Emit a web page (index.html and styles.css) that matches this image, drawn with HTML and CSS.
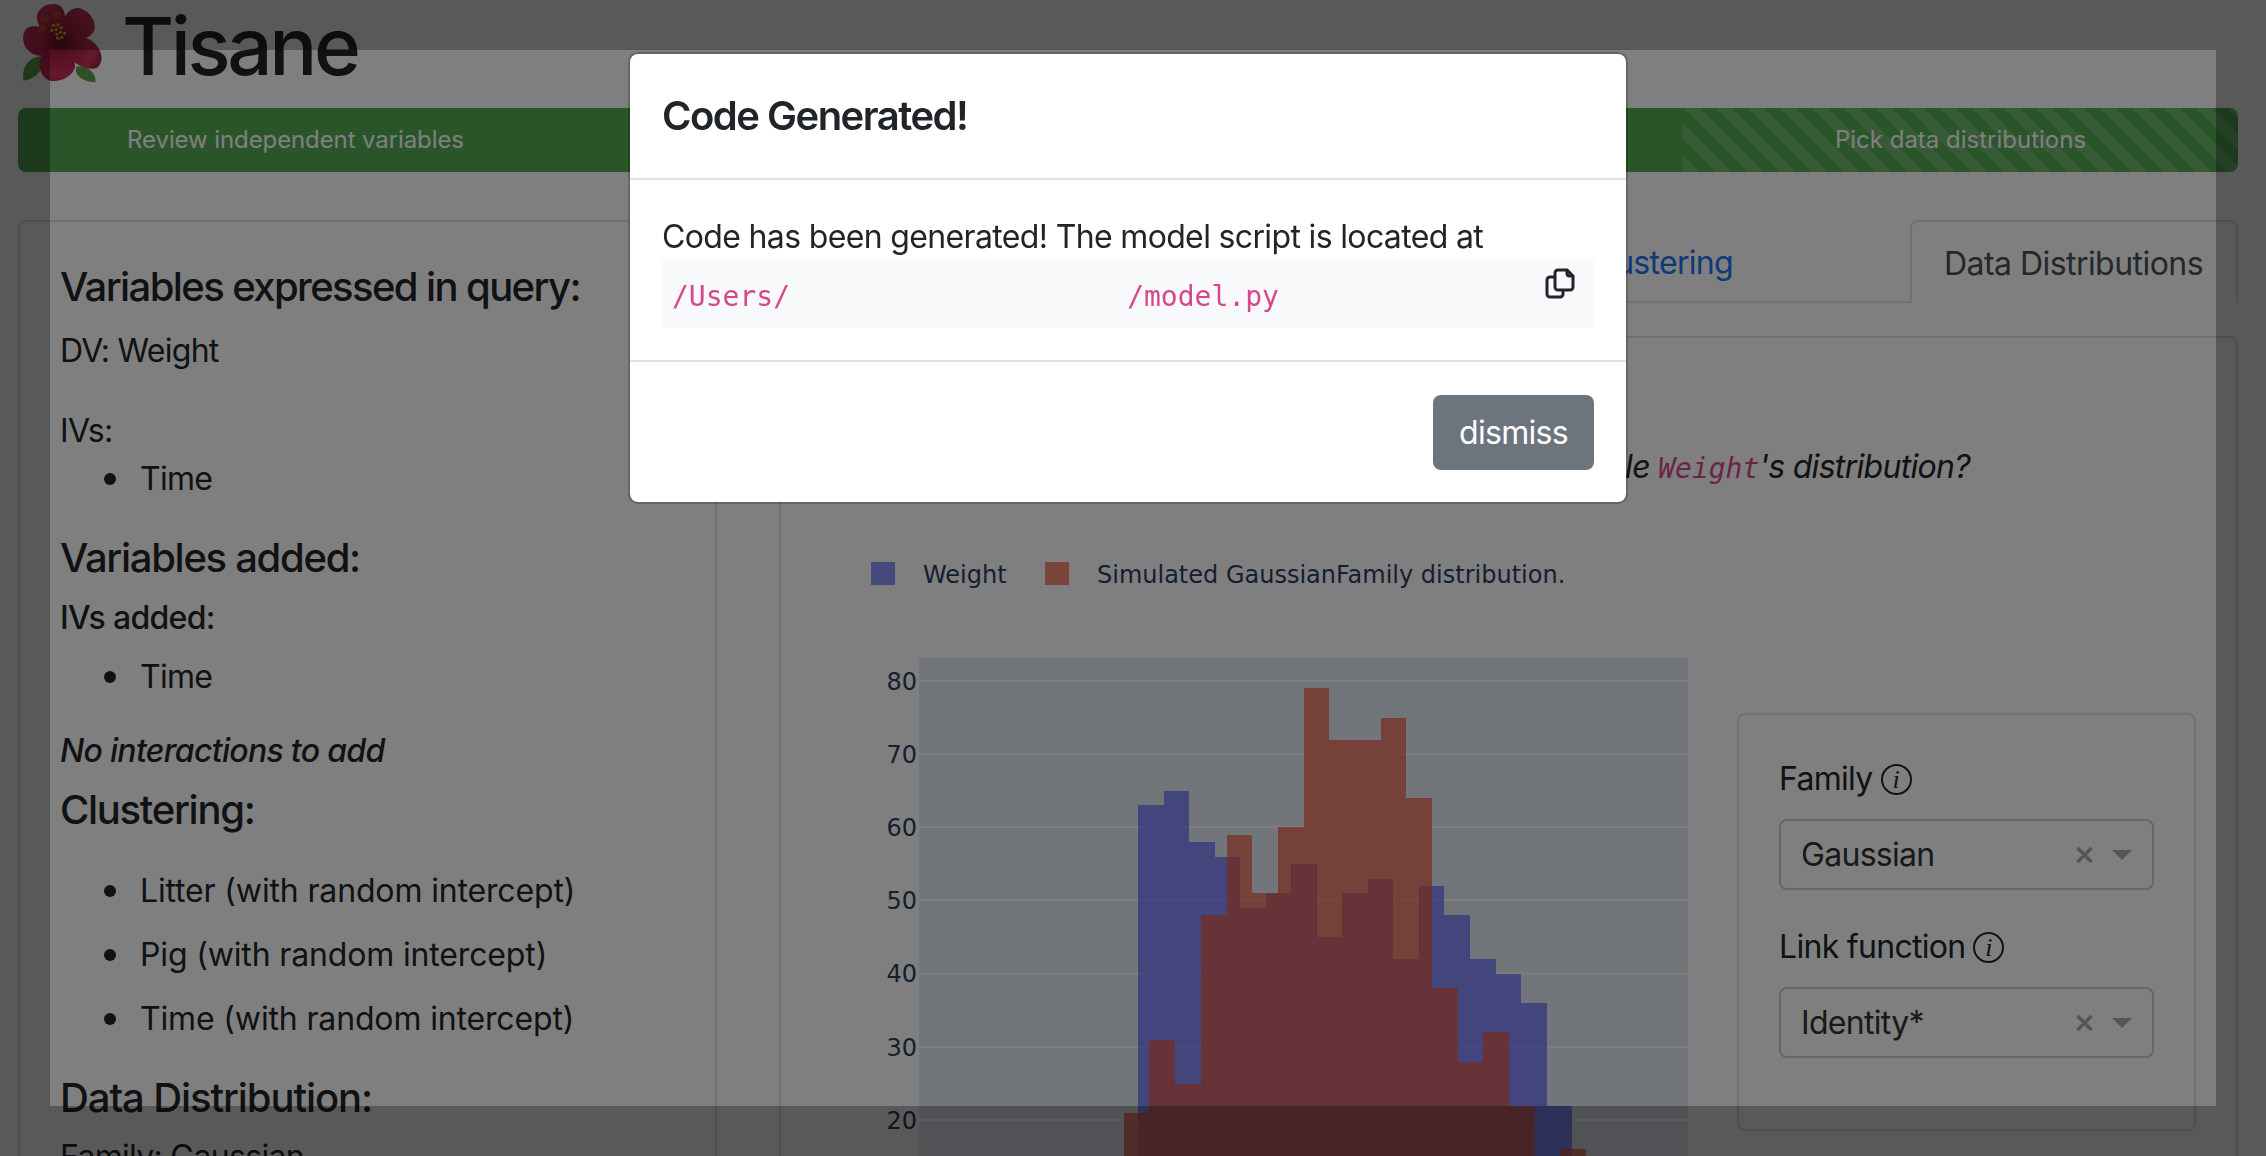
FILE: index.html
```html
<!DOCTYPE html>
<html lang="en">
<head>
    <meta charset="UTF-8">
    <title>Tisane</title>
    <link rel="stylesheet" href="styles.css">
</head>
<body>

<div class="page">
    <header class="title-row">
        <svg class="hibiscus" viewBox="36 12 242 240" aria-hidden="true">
            <defs>
                <radialGradient id="petal" gradientUnits="userSpaceOnUse" cx="150" cy="125" r="135">
                    <stop offset="0" stop-color="#5e0c22"/>
                    <stop offset="0.3" stop-color="#a81e44"/>
                    <stop offset="0.8" stop-color="#cc3159"/>
                    <stop offset="1" stop-color="#98203f"/>
                </radialGradient>
            </defs>
            <path fill="#5fa044" d="M40 245C34 210 50 176 92 172C106 205 84 238 40 245Z"/>
            <path fill="#5fa044" d="M256 250C258 225 240 202 200 202C190 226 212 248 256 250Z"/>
            <path fill="url(#petal)" d="M150 112C150 60 175 25 205 27C240 35 262 70 250 100C225 130 180 130 150 122Z"/>
            <path fill="url(#petal)" d="M150 120C110 115 80 85 80 50C85 25 115 10 140 16C165 22 170 60 160 90Z"/>
            <path fill="url(#petal)" d="M150 140C120 170 85 180 60 160C35 140 32 105 50 88C75 72 125 90 150 125Z"/>
            <path fill="url(#petal)" d="M150 120C185 100 235 110 260 140C280 165 278 195 258 208C225 215 175 190 150 140Z"/>
            <path fill="url(#petal)" d="M150 135C170 145 195 175 195 205C185 235 150 250 120 245C90 235 82 200 92 175C105 150 130 140 150 135Z"/>
            <g fill="#c9492e">
                <circle cx="103" cy="57" r="12"/>
                <circle cx="140" cy="48" r="12"/>
                <circle cx="95" cy="90" r="12"/>
            </g>
            <g fill="#e8ae12">
                <circle cx="130" cy="79" r="5"/><circle cx="144" cy="77" r="5"/><circle cx="153" cy="86" r="5"/>
                <circle cx="125" cy="94" r="5"/><circle cx="138" cy="92" r="5"/><circle cx="151" cy="100" r="5"/>
                <circle cx="163" cy="103" r="5"/><circle cx="140" cy="106" r="5"/><circle cx="142" cy="117" r="5"/>
                <circle cx="155" cy="115" r="5"/>
            </g>
        </svg>
        <h1>Tisane</h1>
    </header>

    <div class="progress">
        <div class="step">Review independent variables</div>
        <div class="step"></div>
        <div class="step"></div>
        <div class="step step-striped">Pick data distributions</div>
    </div>

    <div class="content">
        <aside class="summary">
            <h4 class="sum-first">Variables expressed in query:</h4>
            <p class="dv">DV: Weight</p>
            <p class="ivs">IVs:</p>
            <ul class="sum-list">
                <li>Time</li>
            </ul>
            <h4 class="sum-added">Variables added:</h4>
            <h5 class="sum-sub">IVs added:</h5>
            <ul class="sum-list">
                <li>Time</li>
            </ul>
            <h5 class="sum-none">No interactions to add</h5>
            <h4 class="sum-clustering">Clustering:</h4>
            <ul class="sum-list sum-random">
                <li>Litter (with random intercept)</li>
                <li>Pig (with random intercept)</li>
                <li>Time (with random intercept)</li>
            </ul>
            <h4 class="sum-data">Data Distribution:</h4>
            <p class="family">Family: Gaussian</p>
        </aside>

        <section class="main">
            <nav class="tabs">
                <a class="tab-link">Clustering</a>
                <a class="tab-active">Data Distributions</a>
            </nav>
            <div class="tab-card">
                <p class="question">How would you like to model your dependent variable <code>Weight</code>'s distribution?</p>
                <div class="chart-row">
                    <svg class="chart" width="840" height="660" viewBox="0 0 840 660">
                        <rect class="swatch-blue" x="11" y="22" width="24" height="23"/>
                        <text class="legend" x="63" y="43">Weight</text>
                        <rect class="swatch-red" x="185" y="22" width="24" height="23"/>
                        <text class="legend" x="237" y="43">Simulated GaussianFamily distribution.</text>

                        <rect class="plot-bg" x="59" y="118" width="769" height="600"/>
                        <g class="grid">
                            <path d="M59 141H828M59 214H828M59 287H828M59 360H828M59 433.5H828M59 507H828M59 580H828M59 653H828"/>
                        </g>
                        <g class="tick">
                            <text x="57" y="150">80</text>
                            <text x="57" y="223">70</text>
                            <text x="57" y="296">60</text>
                            <text x="57" y="369">50</text>
                            <text x="57" y="442">40</text>
                            <text x="57" y="516">30</text>
                            <text x="57" y="589">20</text>
                        </g>
                        <path class="bars-blue" transform="translate(278.1 726.6) scale(25.53 -7.32)"
                              d="M0 0V63H1V65H2V58H3V56H4V49H5V51H6V55H7V45H8V51H9V53H10V42H11V52H12V48H13V42H14V40H15V36H16V22H17V0Z"/>
                        <path class="bars-red" transform="translate(263.8 726.6) scale(25.68 -7.32)"
                              d="M0 0V21H1V31H2V25H3V48H4V59H5V51H6V60H7V79H8V72H10V75H11V64H12V38H13V28H14V32H15V22H16V0ZM17 0V16H18V0Z"/>
                    </svg>
                    <div class="controls">
                        <div class="field-label">Family <span class="info">i</span></div>
                        <div class="select">
                            <span class="select-value">Gaussian</span>
                            <svg class="clear" width="17" height="16" viewBox="0 0 17 16"><path d="M1.5 1L15.5 15M15.5 1L1.5 15"/></svg>
                            <span class="caret"></span>
                        </div>
                        <div class="field-label field-link">Link function <span class="info">i</span></div>
                        <div class="select">
                            <span class="select-value">Identity*</span>
                            <svg class="clear" width="17" height="16" viewBox="0 0 17 16"><path d="M1.5 1L15.5 15M15.5 1L1.5 15"/></svg>
                            <span class="caret"></span>
                        </div>
                    </div>
                </div>
            </div>
        </section>
    </div>
</div>

<div class="backdrop"></div>
<div class="backdrop-window"></div>

<div class="modal">
    <div class="modal-header">Code Generated!</div>
    <div class="modal-body">
        <div class="modal-text">Code has been generated! The model script is located at</div>
        <div class="code-block">
            <code class="path">/Users/                    /model.py</code>
            <svg class="copy" width="30" height="31" viewBox="0 0 30 31">
                <path d="M13 2H22L28 8V19A3 3 0 0 1 25 22H13A3 3 0 0 1 10 19V5A3 3 0 0 1 13 2Z"/>
                <path d="M22 2V5.5A2.5 2.5 0 0 0 24.5 8H28"/>
                <path d="M10 9H5A3 3 0 0 0 2 12V26A3 3 0 0 0 5 29H15A3 3 0 0 0 18 26V22"/>
            </svg>
        </div>
    </div>
    <div class="modal-footer">
        <button class="dismiss">dismiss</button>
    </div>
</div>

</body>
</html>
```

FILE: styles.css
```css
html, body {
    margin: 0;
    padding: 0;
    height: 100%;
    overflow: hidden;
}

body {
    background: #fff;
    color: #212529;
    font-family: 'Inter', 'Liberation Sans', sans-serif;
    font-size: 32px;
    line-height: 48px;
    letter-spacing: -0.7px;
}

code {
    font-family: 'DejaVu Sans Mono', 'Liberation Mono', monospace;
    font-size: 28px;
    line-height: 1;
    letter-spacing: 0;
    color: #d6478c;
}

.page {
    width: 2266px;
    height: 1156px;
    overflow: hidden;
    box-sizing: border-box;
    padding-left: 18px;
}

/* title */
.title-row {
    display: flex;
    align-items: flex-start;
    height: 108px;
}

.hibiscus {
    width: 81px;
    height: 80px;
    margin: 3px 0 0 4px;
    flex: none;
}

h1 {
    margin: 0 0 0 19px;
    font-size: 80px;
    line-height: 92px;
    font-weight: 500;
    letter-spacing: -3.4px;
}

/* progress */
.progress {
    display: flex;
    width: 2220px;
    height: 64px;
    border-radius: 8px;
    overflow: hidden;
    background: #54aa52;
}

.step {
    flex: 1;
    display: flex;
    align-items: center;
    justify-content: center;
    color: #fff;
    font-size: 24px;
    letter-spacing: -0.1px;
}

.step-striped {
    letter-spacing: 0;
    background-image: linear-gradient(45deg, rgba(255,255,255,.15) 25%, transparent 25%, transparent 50%, rgba(255,255,255,.15) 50%, rgba(255,255,255,.15) 75%, transparent 75%, transparent);
    background-size: 32px 32px;
}

/* layout */
.content {
    display: grid;
    grid-template-columns: 699px 1459px;
    column-gap: 62px;
    margin-top: 48px;
}

/* left summary */
.summary {
    box-sizing: border-box;
    height: 1100px;
    padding: 41px 40px;
    border: 2px solid #dee2e6;
    border-radius: 8px;
}

.summary h4 {
    margin: 0;
    font-size: 40px;
    line-height: 48px;
    font-weight: 500;
    letter-spacing: -1.3px;
}

.summary h5 {
    margin: 0;
    font-size: 32px;
    line-height: 48px;
    font-weight: 500;
}

.summary p {
    margin: 0;
}

.summary .sum-first { letter-spacing: -1.6px; }
.summary .dv { padding-top: 16px; }
.summary .ivs { padding-top: 32px; }
.summary .sum-added { padding-top: 31px; }
.summary .sum-sub { padding-top: 11.5px; }
.summary .sum-none { padding-top: 25.5px; font-style: italic; }
.summary .sum-clustering { padding-top: 11px; }
.summary .sum-data { padding-top: 31px; letter-spacing: -1.1px; }
.summary .family { padding-top: 11px; }

.sum-list {
    margin: 0;
    padding-left: 80px;
    list-style: none;
}

.sum-list li {
    position: relative;
}

.sum-list li::before {
    content: "";
    position: absolute;
    left: -36px;
    top: 18px;
    width: 12px;
    height: 12px;
    border-radius: 50%;
    background: #212529;
}

.sum-sub + .sum-list { padding-top: 11.5px; }
.sum-random { padding-top: 33.5px; letter-spacing: -0.15px; }
.sum-random li + li { margin-top: 16px; }

/* tabs */
.tabs {
    display: flex;
    justify-content: flex-end;
    align-items: flex-end;
    height: 83px;
    box-sizing: border-box;
    border-bottom: 2px solid #dee2e6;
}

.tab-link {
    color: #1c74f0;
    margin-right: 177px;
    padding-bottom: 14px;
}

.tab-active {
    box-sizing: border-box;
    width: 328px;
    height: 83px;
    margin-bottom: -2px;
    padding: 18px 0 0 32px;
    background: #fff;
    border: 2px solid #dee2e6;
    border-bottom: 0;
    border-radius: 8px 8px 0 0;
    color: #495057;
    letter-spacing: -0.55px;
}

.tab-card {
    box-sizing: border-box;
    height: 1000px;
    margin-top: 33px;
    padding-top: 105px;
    border: 2px solid #dee2e6;
    border-radius: 8px;
}

.question {
    margin: 0 266px 0 0;
    text-align: right;
    font-style: italic;
    white-space: nowrap;
}

.chart-row {
    display: flex;
    align-items: flex-start;
    margin-top: 49px;
    padding-left: 79px;
}

/* chart */
.chart {
    flex: none;
    display: block;
    overflow: hidden;
}

.legend {
    font-family: 'DejaVu Sans', sans-serif;
    font-size: 24px;
    letter-spacing: 0;
    fill: #2a3f5f;
}

.swatch-blue { fill: #636efa; opacity: .75; }
.swatch-red { fill: #ef553b; opacity: .7; }
.plot-bg { fill: #e5ecf6; }
.grid path { stroke: #fff; stroke-width: 2; fill: none; }

.tick text {
    font-family: 'DejaVu Sans', sans-serif;
    font-size: 24px;
    letter-spacing: 0;
    fill: #2a3f5f;
    text-anchor: end;
}

.bars-blue { fill: #636efa; opacity: .75; shape-rendering: crispEdges; }
.bars-red { fill: #ef553b; opacity: .7; shape-rendering: crispEdges; }

/* family / link controls */
.controls {
    box-sizing: border-box;
    flex: none;
    width: 459px;
    height: 418px;
    margin: 173px 0 0 37px;
    padding: 40px 40px 0;
    border: 2px solid #dee2e6;
    border-radius: 8px;
}

.field-label {
    display: flex;
    align-items: center;
    gap: 8px;
    height: 48px;
    color: #212529;
}

.field-link {
    margin-top: 33px;
}

.info {
    box-sizing: border-box;
    width: 31px;
    height: 31px;
    border: 2px solid #212529;
    border-radius: 50%;
    font-family: 'Liberation Serif', serif;
    font-style: italic;
    font-size: 26px;
    line-height: 27px;
    text-align: center;
    letter-spacing: 0;
}

.select {
    box-sizing: border-box;
    display: flex;
    align-items: center;
    height: 71px;
    margin-top: 16px;
    padding: 0 20px;
    border: 2px solid #ccc;
    border-radius: 8px;
}

.select-value {
    flex: 1;
    color: #333;
}

.clear path {
    stroke: #aaa;
    stroke-width: 3.5;
    fill: none;
}

.caret {
    width: 0;
    height: 0;
    margin-left: 19px;
    border-left: 10px solid transparent;
    border-right: 10px solid transparent;
    border-top: 10px solid #aaa;
}

/* modal + backdrop */
.backdrop {
    position: fixed;
    inset: 0;
    background: rgba(0,0,0,.5);
}

.backdrop-window {
    position: fixed;
    left: 50px;
    top: 50px;
    width: 2166px;
    height: 1056px;
    box-shadow: 0 0 0 3000px rgba(0,0,0,.3);
}

.modal {
    position: fixed;
    left: 628px;
    top: 52px;
    width: 1000px;
    height: 452px;
    box-sizing: border-box;
    background: #fff;
    background-clip: padding-box;
    border: 2px solid rgba(0,0,0,.2);
    border-radius: 10px;
}

.modal-header {
    box-sizing: border-box;
    height: 126px;
    padding: 32px 32px 0;
    border-bottom: 2px solid #dee2e6;
    font-size: 40px;
    line-height: 60px;
    font-weight: 600;
    letter-spacing: -1.5px;
}

.modal-body {
    padding: 33px 32px 33px;
    height: 182px;
    box-sizing: border-box;
    border-bottom: 2px solid #dee2e6;
}

.modal-text {
    height: 47px;
    letter-spacing: -0.65px;
}

.code-block {
    display: flex;
    justify-content: space-between;
    align-items: flex-start;
    height: 68px;
    padding: 0 19px 0 10px;
    background: #f8f9fa;
    box-sizing: border-box;
}

.path {
    padding-top: 23px;
    white-space: pre;
}

.copy {
    margin-top: 8px;
    flex: none;
}

.copy path {
    fill: none;
    stroke: #212529;
    stroke-width: 3;
}

.modal-footer {
    display: flex;
    justify-content: flex-end;
    padding: 33px 32px 0;
}

.dismiss {
    width: 161px;
    height: 75px;
    padding: 0;
    border: 0;
    border-radius: 8px;
    background: #6c757d;
    color: #fff;
    font-family: inherit;
    font-size: 32px;
    letter-spacing: -0.7px;
}
```
